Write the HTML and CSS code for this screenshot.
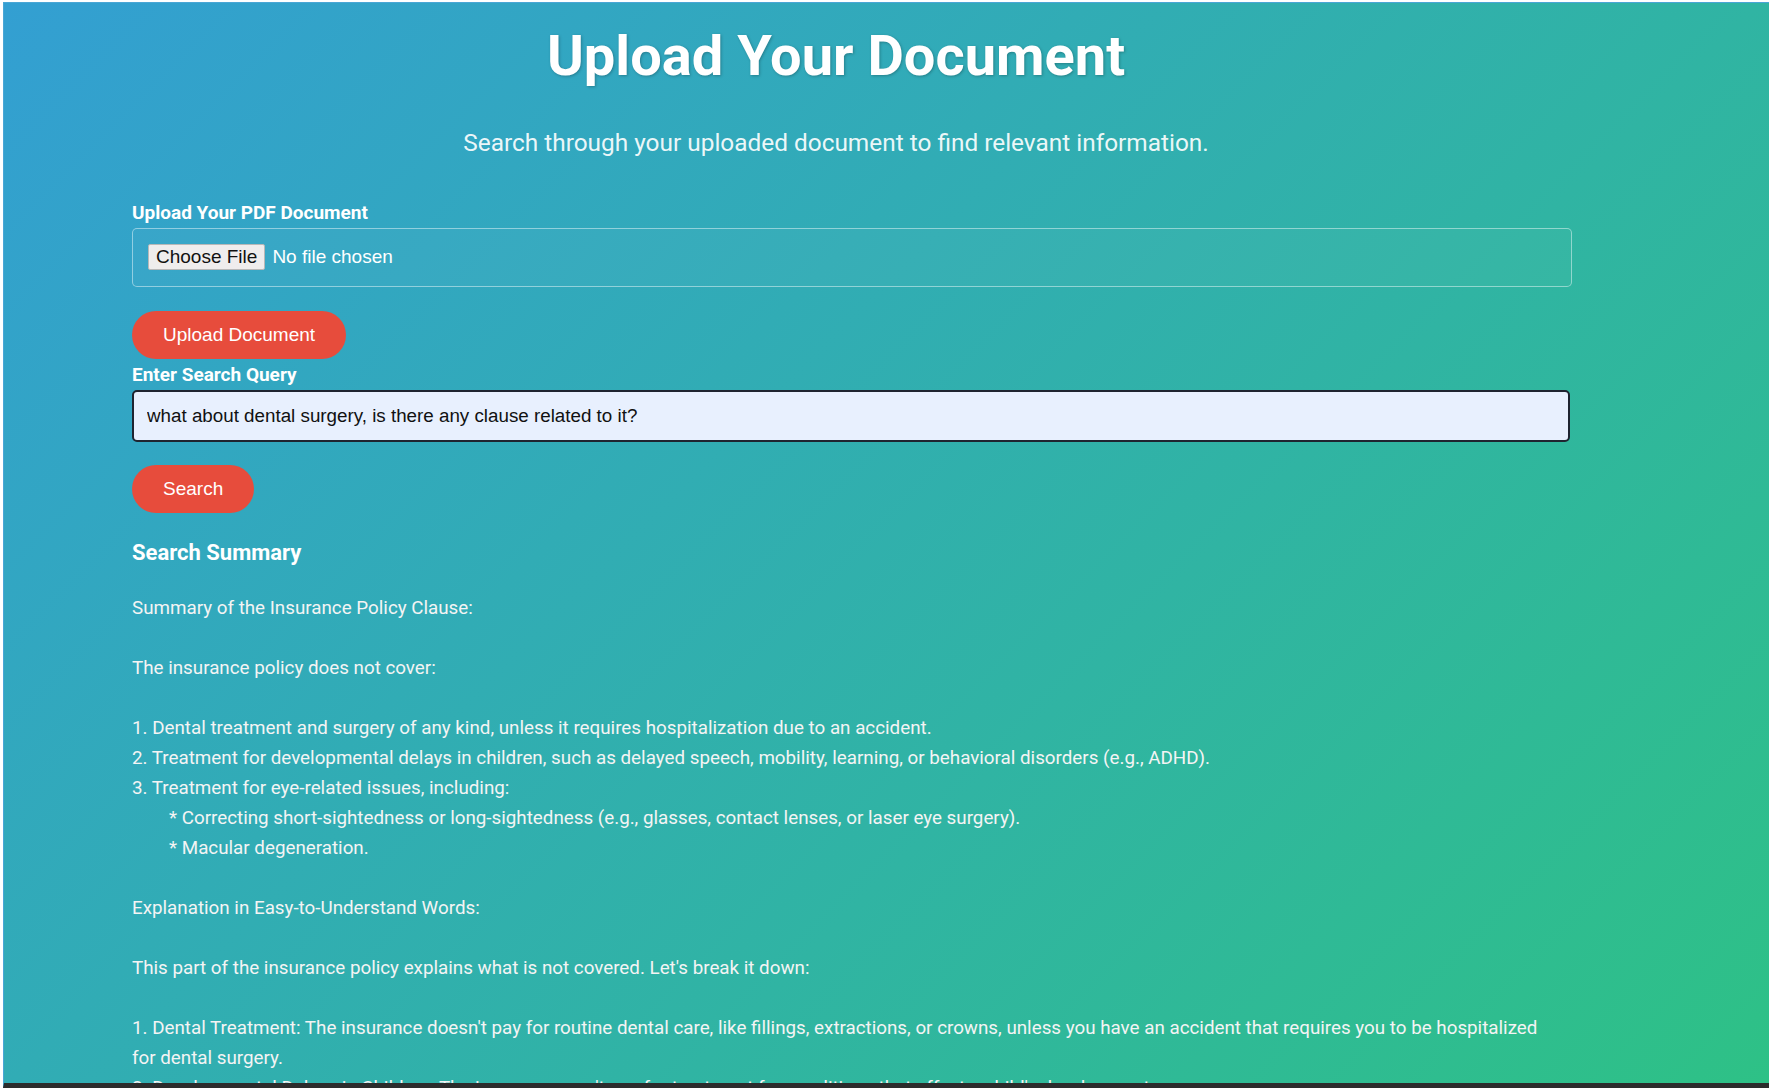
FILE: index.html
```html
<!DOCTYPE html>
<html lang="en">
<head>
    <title>Document Search</title>
    <link rel="stylesheet" href="styles.css">
</head>
<body>
    <div class="screen">
        <div class="container">
            <h1 class="title">Upload Your Document</h1>
            <p class="subtitle">Search through your uploaded document to find relevant information.</p>

            <form class="upload-form">
                <label class="label" for="pdf">Upload Your PDF Document</label>
                <input class="file-input" type="file" id="pdf" accept=".pdf">
                <button class="btn" type="button">Upload Document</button>
            </form>

            <form class="search-form">
                <label class="label" for="query">Enter Search Query</label>
                <input class="query-input" type="text" id="query" value="what about dental surgery, is there any clause related to it?">
                <button class="btn search-btn" type="button">Search</button>
            </form>

            <h3 class="summary-title">Search Summary</h3>
            <p class="summary">Summary of the Insurance Policy Clause:

The insurance policy does not cover:

1. Dental treatment and surgery of any kind, unless it requires hospitalization due to an accident.
2. Treatment for developmental delays in children, such as delayed speech, mobility, learning, or behavioral disorders (e.g., ADHD).
3. Treatment for eye-related issues, including:
	* Correcting short-sightedness or long-sightedness (e.g., glasses, contact lenses, or laser eye surgery).
	* Macular degeneration.

Explanation in Easy-to-Understand Words:

This part of the insurance policy explains what is not covered. Let's break it down:

1. Dental Treatment: The insurance doesn't pay for routine dental care, like fillings, extractions, or crowns, unless you have an accident that requires you to be hospitalized for dental surgery.
2. Developmental Delays in Children: The insurance won't pay for treatment for conditions that affect a child's development.</p>
        </div>
    </div>
</body>
</html>
```

FILE: styles.css
```css
body {
    margin: 0;
    background-color: white;
    font-family: Roboto, "Liberation Sans", Arial, sans-serif;
}
.screen {
    margin: 2px 0 0 3px;
    width: 1765px;
    height: 1080px;
    border-top: 1px solid #4aa6d6;
    border-left: 1px solid #4aa6d6;
    border-bottom: 5px solid #2c2c2c;
    background: linear-gradient(135deg, #339fd2, #2ec186);
    color: white;
    overflow: hidden;
}
.container {
    width: 1408px;
    margin-left: 128px;
}
.title {
    margin: 20px 0 0;
    font-size: 56px;
    line-height: 66px;
    font-weight: bold;
    text-align: center;
    text-shadow: 1px 1px 3px rgba(0, 0, 0, 0.25);
}
.subtitle {
    margin: 40px 0 0;
    font-size: 24.4px;
    line-height: 28px;
    text-align: center;
    color: rgba(255, 255, 255, 0.92);
}
.upload-form {
    margin-top: 45px;
}
.label {
    display: block;
    font-size: 19px;
    line-height: 22px;
    font-weight: bold;
    margin-bottom: 4px;
}
.file-input {
    display: block;
    width: 100%;
    height: 27px;
    padding: 15px;
    border: 1px solid rgba(255, 255, 255, 0.45);
    border-radius: 5px;
    background-color: rgba(255, 255, 255, 0.03);
    color: white;
    font-family: "Liberation Sans", Arial, sans-serif;
    font-size: 19px;
}
.file-input::file-selector-button {
    font-family: "Liberation Sans", Arial, sans-serif;
    font-size: 19px;
    height: 26px;
    padding: 0 7px;
    margin-right: 7px;
    background-color: #efeded;
    color: #111;
    border: 1px solid #b8b8b8;
    border-radius: 2px;
}
.btn {
    display: block;
    margin-top: 24px;
    padding: 13px 31px;
    border: none;
    border-radius: 25px;
    background-color: #e74c3c;
    color: white;
    font-family: "Liberation Sans", Arial, sans-serif;
    font-size: 19px;
    line-height: 22px;
    cursor: pointer;
}
.search-form {
    margin-top: 5px;
}
.query-input {
    display: block;
    width: 100%;
    height: 22px;
    padding: 13px;
    border: 2px solid #1f2430;
    border-radius: 5px;
    background-color: #e8f0fe;
    color: #111;
    font-family: "Liberation Sans", Arial, sans-serif;
    font-size: 18.8px;
    outline: none;
}
.search-btn {
    margin-top: 23px;
}
.summary-title {
    margin: 27px 0 0;
    font-size: 22px;
    line-height: 26px;
    font-weight: bold;
}
.summary {
    margin: 27px 0 0;
    font-size: 18.8px;
    line-height: 30px;
    white-space: pre-wrap;
    tab-size: 37px;
    color: #f4f4f4;
}
```
